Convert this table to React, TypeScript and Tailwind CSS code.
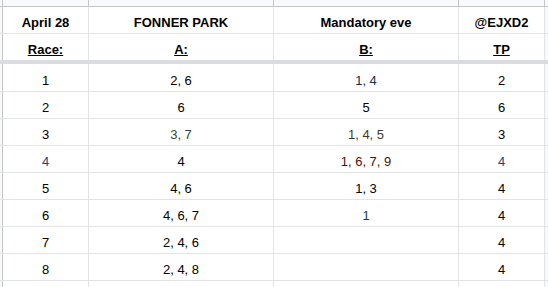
import React from 'react';

type Row = {
  race: string;
  a: string;
  b: string;
  tp: string;
  raceColor?: string;
  aColor?: string;
  bColor?: string;
  tpColor?: string;
};

const ROWS: Row[] = [
  { race: '1', a: '2, 6', b: '1, 4', tp: '2', bColor: 'text-[#1c2b4a]' },
  { race: '2', a: '6', b: '5', tp: '6' },
  { race: '3', a: '3, 7', b: '1, 4, 5', tp: '3', aColor: 'text-[#2e4a3c]', bColor: 'text-[#3c3c2c]' },
  { race: '4', a: '4', b: '1, 6, 7, 9', tp: '4', raceColor: 'text-[#1c4570]', bColor: 'text-[#4a0f0f]', tpColor: 'text-[#1c4570]' },
  { race: '5', a: '4, 6', b: '1, 3', tp: '4' },
  { race: '6', a: '4, 6, 7', b: '1', tp: '4', bColor: 'text-[#0b3d6b]' },
  { race: '7', a: '2, 4, 6', b: '', tp: '4' },
  { race: '8', a: '2, 4, 8', b: '', tp: '4' },
];

const cell = 'flex items-end justify-center border-r border-[#e2e3e3] pb-[2px] leading-[16px]';

const SheetRow = ({ cells, h, bottom }: { cells: React.ReactNode[]; h: string; bottom: string }) => (
  <div className={`flex ${h} ${bottom}`}>
    <div className="w-[3px] shrink-0 bg-[#f8f9fa] border-r border-[#c4c7c5]" />
    <div className={`${cell} w-[86px]`}>{cells[0]}</div>
    <div className={`${cell} w-[185px]`}>{cells[1]}</div>
    <div className={`${cell} w-[185px]`}>{cells[2]}</div>
    <div className={`${cell} w-[86px]`}>{cells[3]}</div>
    <div className="flex-1 bg-[#f8f9fa]" />
  </div>
);

export default function App() {
  return (
    <div
      className="w-[548px] h-[287px] overflow-hidden bg-white text-[13px] text-black"
      style={{ fontFamily: '"Liberation Sans", Arial, sans-serif' }}
    >
      {/* column header strip */}
      <div className="flex h-[7px] bg-[#f8f9fa] border-b border-[#c4c7c5]">
        <div className="w-[3px] border-r border-[#c4c7c5]" />
        <div className="w-[86px] border-r border-[#c4c7c5]" />
        <div className="w-[185px] border-r border-[#c4c7c5]" />
        <div className="w-[185px] border-r border-[#c4c7c5]" />
        <div className="w-[86px] border-r border-[#c4c7c5]" />
      </div>

      <SheetRow
        h="h-[27px]"
        bottom="border-b border-[#e2e3e3]"
        cells={[
          <b key="1">April 28</b>,
          <b key="2">FONNER PARK</b>,
          <b key="3">Mandatory eve</b>,
          <b key="4">@EJXD2</b>,
        ]}
      />
      <SheetRow
        h="h-[30px]"
        bottom="border-b-4 border-[#dadce0]"
        cells={[
          <b key="1" className="underline">Race:</b>,
          <b key="2" className="underline">A:</b>,
          <b key="3" className="underline">B:</b>,
          <b key="4" className="underline">TP</b>,
        ]}
      />

      {ROWS.map((r, i) => (
        <SheetRow
          key={r.race}
          h={i === 0 ? 'h-[28px]' : 'h-[27px]'}
          bottom="border-b border-[#e2e3e3]"
          cells={[
            <span key="1" className={r.raceColor}>{r.race}</span>,
            <span key="2" className={r.aColor}>{r.a}</span>,
            <span key="3" className={r.bColor}>{r.b}</span>,
            <span key="4" className={r.tpColor}>{r.tp}</span>,
          ]}
        />
      ))}
      <SheetRow h="h-[27px]" bottom="" cells={['', '', '', '']} />
    </div>
  );
}
